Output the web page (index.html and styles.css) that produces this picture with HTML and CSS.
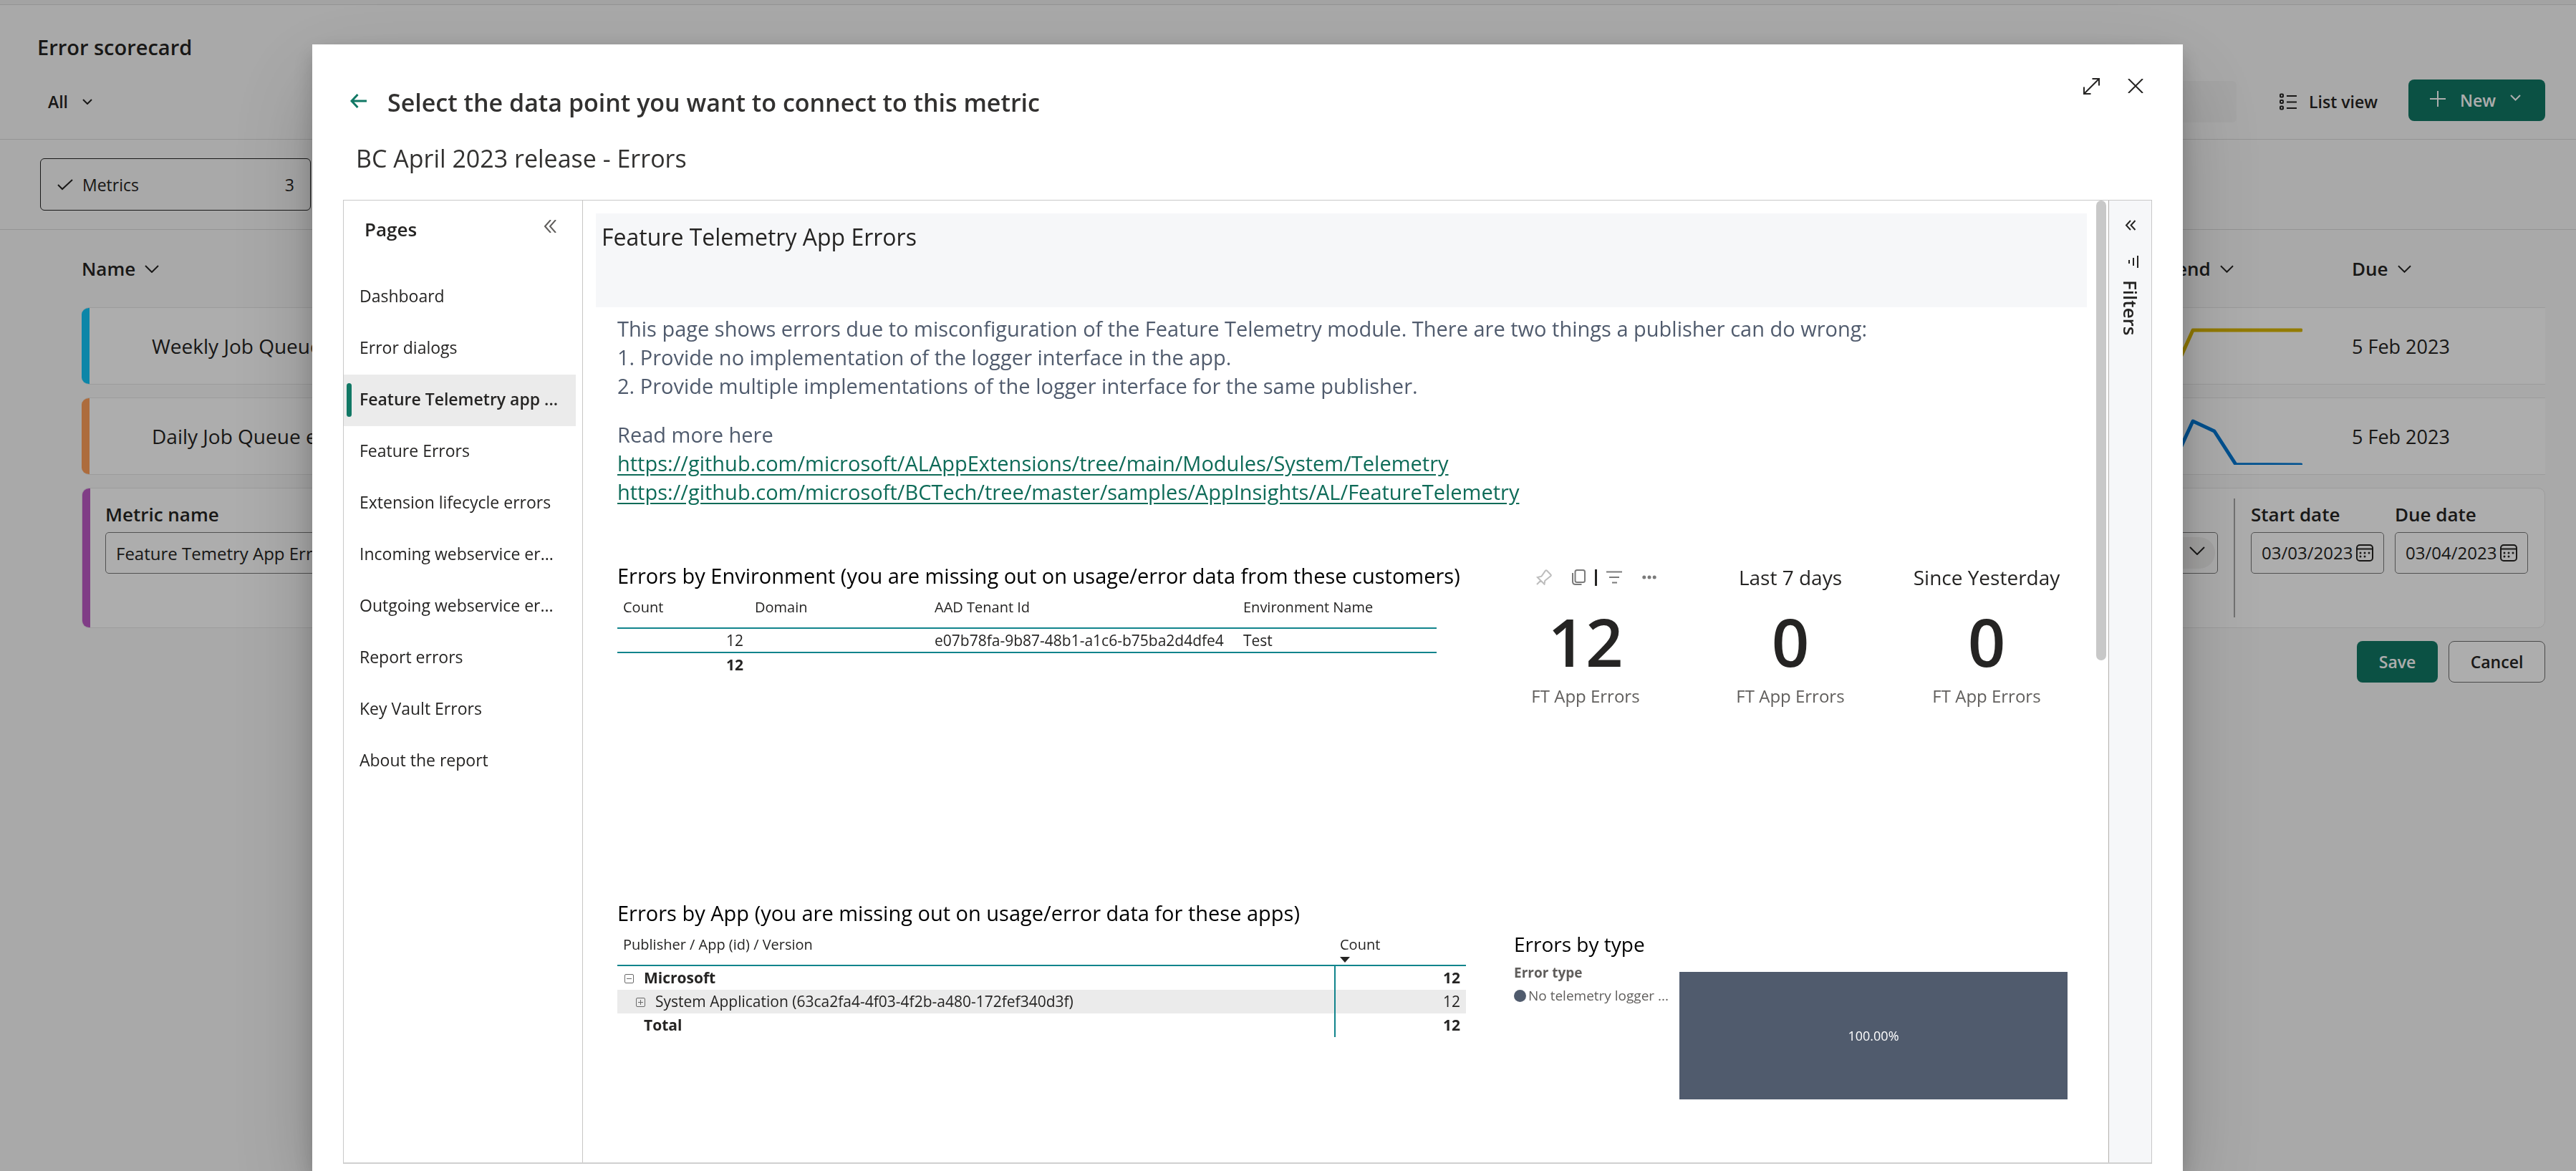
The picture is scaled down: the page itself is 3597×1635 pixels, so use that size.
FILE: index.html
```html
<!DOCTYPE html>
<html lang="en">
<head>
<meta charset="utf-8">
<title>Error scorecard</title>
<link rel="stylesheet" href="styles.css">
</head>
<body>
<div class="topbar"></div>
<header class="page-header">
  <h1>Error scorecard</h1>
  <div class="toolbar">
    <button class="filter-all" type="button">All
      <svg class="chev" width="14" height="8" viewBox="0 0 14 8"><path d="M1 1l6 6 6-6"/></svg>
    </button>
    <input class="search" type="search" aria-label="Search metrics">
    <button class="list-view" type="button">
      <svg width="24" height="24" viewBox="0 0 24 24"><path d="M10 4h14M10 12.500h14M10 21h14"/><rect x="1" y="1.500" width="4" height="4" rx="1"/><rect x="1" y="10" width="4" height="4" rx="1"/><rect x="1" y="18.500" width="4" height="4" rx="1"/></svg>
      List view
    </button>
    <button class="btn primary new" type="button">
      <svg class="plus" width="22" height="22" viewBox="0 0 22 22"><path d="M11 0v22M0 11h22"/></svg>
      New
      <svg class="chev" width="15" height="9" viewBox="0 0 15 9"><path d="M1 1l6.500 6.500L14 1"/></svg>
    </button>
  </div>
</header>
<section class="summary">
  <button class="summary-card" type="button">
    <svg width="22" height="16" viewBox="0 0 22 16"><path d="M1 8l6 6L21 1"/></svg>
    <span>Metrics</span><span class="count">3</span>
  </button>
</section>
<main class="scorecard">
  <div class="cols heads">
    <span class="head">Name <svg class="chev" width="20" height="11" viewBox="0 0 20 11"><path d="M1 1l9 9 9-9"/></svg></span>
    <span class="head">Trend <svg class="chev" width="19" height="11" viewBox="0 0 20 11"><path d="M1 1l9 9 9-9"/></svg></span>
    <span class="head">Due <svg class="chev" width="19" height="11" viewBox="0 0 20 11"><path d="M1 1l9 9 9-9"/></svg></span>
  </div>
  <div class="cols metric blue">
    <span class="metric-name">Weekly Job Queue errors</span>
    <svg class="trend" width="202" height="80" viewBox="0 0 202 80"><path stroke="#d9b500" d="M0 78h22L49 18h151"/></svg>
    <span>5 Feb 2023</span>
  </div>
  <div class="cols metric orange">
    <span class="metric-name">Daily Job Queue errors</span>
    <svg class="trend" width="202" height="80" viewBox="0 0 202 80"><path stroke="#0078d4" d="M0 78h22L49 19l30 14 30 46.500 91 .5"/></svg>
    <span>5 Feb 2023</span>
  </div>
  <form class="metric-edit">
    <label class="field name-field"><span>Metric name</span><input class="box" value="Feature Temetry App Errors"></label>
    <label class="field status-field"><span>Status</span>
      <span class="box pill-box"><select><option></option></select><svg class="chev" width="22" height="12" viewBox="0 0 22 12"><path d="M1 1l10 10L21 1"/></svg></span>
    </label>
    <span class="divider"></span>
    <label class="field"><span>Start date</span>
      <span class="box date"><input value="03/03/2023"><svg width="24" height="24" viewBox="0 0 24 24"><rect x="1" y="1" width="22" height="22" rx="4"/><path d="M1 6.500h22"/><path class="dots" d="M6 12h0M12 12h0M18 12h0M6 17h0M12 17h0"/></svg></span>
    </label>
    <label class="field"><span>Due date</span>
      <span class="box date"><input value="03/04/2023"><svg width="24" height="24" viewBox="0 0 24 24"><rect x="1" y="1" width="22" height="22" rx="4"/><path d="M1 6.500h22"/><path class="dots" d="M6 12h0M12 12h0M18 12h0M6 17h0M12 17h0"/></svg></span>
    </label>
  </form>
  <div class="form-actions">
    <button class="btn primary save" type="button">Save</button>
    <button class="btn outline" type="button">Cancel</button>
  </div>
</main>

<div class="overlay"></div>
<div class="modal" role="dialog" aria-labelledby="dlg-title">
  <header class="modal-header">
    <button class="back" type="button" aria-label="Back"><svg width="24" height="20" viewBox="0 0 24 20"><path d="M23 10H2M10.500 1L2 10l8.500 9"/></svg></button>
    <h2 id="dlg-title">Select the data point you want to connect to this metric</h2>
    <div class="window-actions">
      <button type="button" aria-label="Expand"><svg width="23" height="23" viewBox="0 0 23 23"><path d="M1 22L22 1M12.500 1H22v9.500M1 12.500V22h9.500"/></svg></button>
      <button type="button" aria-label="Close"><svg width="22" height="20" viewBox="0 0 22 20"><path d="M1 0l20 20M21 0L1 20"/></svg></button>
    </div>
  </header>
  <p class="report-name">BC April 2023 release - Errors</p>
  <div class="panel">
    <nav class="pages">
      <div class="pages-head">
        <h3>Pages</h3>
        <button type="button" aria-label="Collapse pages"><svg width="17" height="18" viewBox="0 0 17 18"><path d="M9 0L1 9l8 9M16 0L8 9l8 9"/></svg></button>
      </div>
      <a href="#">Dashboard</a>
      <a href="#">Error dialogs</a>
      <a href="#" class="current">Feature Telemetry app ...</a>
      <a href="#">Feature Errors</a>
      <a href="#">Extension lifecycle errors</a>
      <a href="#">Incoming webservice er...</a>
      <a href="#">Outgoing webservice er...</a>
      <a href="#">Report errors</a>
      <a href="#">Key Vault Errors</a>
      <a href="#">About the report</a>
    </nav>
    <article class="report">
      <div class="scroll-thumb"></div>
      <h3 class="banner">Feature Telemetry App Errors</h3>
      <div class="intro">
        <p>This page shows errors due to misconfiguration of the Feature Telemetry module. There are two things a publisher can do wrong:<br>1. Provide no implementation of the logger interface in the app.<br>2. Provide multiple implementations of the logger interface for the same publisher.</p>
        <p>Read more here<br><a href="#">https://github.com/microsoft/ALAppExtensions/tree/main/Modules/System/Telemetry</a><br><a href="#">https://github.com/microsoft/BCTech/tree/master/samples/AppInsights/AL/FeatureTelemetry</a></p>
      </div>
      <div class="row-top">
        <section>
          <h4>Errors by Environment (you are missing out on usage/error data from these customers)</h4>
          <table class="env">
            <colgroup><col class="c-count"><col class="c-domain"><col class="c-tenant"><col class="c-env"></colgroup>
            <thead><tr><th>Count</th><th>Domain</th><th>AAD Tenant Id</th><th>Environment Name</th></tr></thead>
            <tbody><tr><td class="num">12</td><td></td><td>e07b78fa-9b87-48b1-a1c6-b75ba2d4dfe4</td><td>Test</td></tr></tbody>
            <tfoot><tr><td class="num">12</td><td></td><td></td><td></td></tr></tfoot>
          </table>
        </section>
        <section class="card">
          <div class="visual-tools">
            <button class="pin" type="button" aria-label="Pin visual"><svg width="22" height="22" viewBox="0 0 22 22"><path d="M1 21l5.500-5.500M1.800 11l9.700 9.700.8-5L20 9.500c1-.8 1-1.500.3-2.300L15 1.800c-.8-.8-1.600-.8-2.300.3L7.500 9.600z"/></svg></button>
            <span class="tool-pair">
              <button type="button" aria-label="Copy visual"><svg width="19" height="22" viewBox="0 0 19 22"><rect x="4.500" y="1" width="13.500" height="17" rx="2.500"/><path d="M1 5v12c0 2.800 1.400 4 4 4h8.500"/></svg></button>
              <i></i>
              <button type="button" aria-label="Filters on visual"><svg width="22" height="18" viewBox="0 0 22 18"><path d="M0 1.500h22M4 9h14M8 16.500h7"/></svg></button>
            </span>
            <button type="button" aria-label="More options"><svg class="more" width="20" height="6" viewBox="0 0 20 6"><circle cx="2.800" cy="3" r="2.500"/><circle cx="10" cy="3" r="2.500"/><circle cx="17.200" cy="3" r="2.500"/></svg></button>
          </div>
          <strong>12</strong><span>FT App Errors</span>
        </section>
        <section class="card"><h5>Last 7 days</h5><strong>0</strong><span>FT App Errors</span></section>
        <section class="card"><h5>Since Yesterday</h5><strong>0</strong><span>FT App Errors</span></section>
      </div>
      <div class="row-bottom">
        <section>
          <h4>Errors by App (you are missing out on usage/error data for these apps)</h4>
          <table class="matrix">
            <colgroup><col><col class="c-total"></colgroup>
            <thead><tr><th>Publisher / App (id) / Version</th><th>Count<svg width="14" height="8" viewBox="0 0 14 8"><path d="M0 0h14L7 8z"/></svg></th></tr></thead>
            <tbody>
              <tr class="strong"><td><svg width="13" height="13" viewBox="0 0 13 13"><rect x=".5" y=".5" width="12" height="12" rx="1.500"/><path d="M3 6.500h7"/></svg>Microsoft</td><td class="num">12</td></tr>
              <tr class="child"><td><svg width="13" height="13" viewBox="0 0 13 13"><rect x=".5" y=".5" width="12" height="12" rx="1.500"/><path d="M3 6.500h7M6.500 3v7"/></svg>System Application (63ca2fa4-4f03-4f2b-a480-172fef340d3f)</td><td class="num">12</td></tr>
              <tr class="strong total"><td>Total</td><td class="num">12</td></tr>
            </tbody>
          </table>
        </section>
        <section class="by-type">
          <h4>Errors by type</h4>
          <div class="treemap">
            <div class="legend"><b>Error type</b><span><i></i>No telemetry logger ...</span></div>
            <div class="tile">100.00%</div>
          </div>
        </section>
      </div>
    </article>
    <aside class="filters">
      <button type="button" aria-label="Expand filters"><svg width="16" height="15" viewBox="0 0 16 15"><path d="M8 1L2 7.500 8 14M14.500 1l-6 6.500 6 6.500"/></svg></button>
      <svg width="16" height="17" viewBox="0 0 16 17"><path d="M14 0v17M8 3v11M2 6v5"/></svg>
      <h3>Filters</h3>
    </aside>
  </div>
</div>
</body>
</html>
```
FILE: styles.css
```css
* { box-sizing: border-box; }

body {
  margin: 0;
  min-height: 100vh;
  overflow: hidden;
  background: #fafafa;
  color: #252423;
  font-family: "Open Sans", "Noto Sans", sans-serif;
  font-size: 23px;
}

h1, h2, h3, h4, h5, p { margin: 0; }
svg { display: block; flex: none; fill: none; stroke: currentColor; stroke-width: 2; }
button { padding: 0; border: 0; background: none; color: inherit; font: inherit; }
input, select { min-width: 0; border: 0; background: none; color: inherit; font: inherit; }

/* Scorecard page */
.topbar { height: 7px; background: #f1f1f1; border-bottom: 1px solid #dadada; }

.page-header { padding: 39px 43px 21px 52px; border-bottom: 1px solid #dadada; }
.page-header h1 { font-size: 29px; font-weight: 600; line-height: 40px; }

.toolbar { display: flex; align-items: center; height: 62px; margin-top: 25px; font-weight: 600; }
.filter-all { display: flex; align-items: center; gap: 20px; margin-left: 15px; }
.search { width: 400px; height: 58px; margin-left: auto; border-radius: 6px; background: #f3f3f3; }
.list-view { display: flex; align-items: center; gap: 17px; margin: 0 43px 0 60px; }

.btn { height: 58px; border-radius: 8px; font-weight: 600; }
.primary { background: #117865; color: #fff; }
.outline { width: 135px; border: 1px solid #6e6e6e; background: #fff; }
.save { width: 113px; }
.new { display: flex; align-items: center; align-self: flex-start; gap: 20px; width: 191px; padding-left: 30px; }
.plus { margin-bottom: 4px; }
.new .chev { margin-bottom: 8px; }

.summary { padding: 26px 56px; border-bottom: 1px solid #dadada; }
.summary-card { display: flex; align-items: center; gap: 13px; width: 378px; height: 73px; padding: 0 22px 0 23px; border: 1px solid #242424; border-radius: 6px; }
.summary-card .count { margin-left: auto; }

.scorecard { display: flex; flex-direction: column; gap: 18px; padding: 0 43px 0 114px; }
.cols { display: grid; grid-template-columns: 1fr 271px 270px; align-items: center; height: 108px; }
.heads { margin-bottom: -18px; font-size: 26px; font-weight: 600; }
.head { display: flex; align-items: center; gap: 13px; }
.metric, .metric-edit { position: relative; border: 1px solid #e6e6e6; border-radius: 10px; background: #fff; overflow: hidden; }
.metric { border-width: 1px 0; border-radius: 10px 0 0 10px; font-size: 27px; }
.metric::before, .metric-edit::before { content: ""; position: absolute; inset: 0 auto 0 0; width: 11px; background: #bd5bc6; }
.blue::before { background: #14c6f8; }
.orange::before { background: #ffa05a; }
.metric-name { padding-left: 98px; font-size: 28px; white-space: nowrap; }
.trend { stroke-width: 5; stroke-linecap: round; stroke-linejoin: round; }

.metric-edit { display: flex; gap: 22px; height: 196px; padding: 18px 23px 0 32px; }
.field { display: flex; flex-direction: column; gap: 7px; font-size: 26px; font-weight: 600; line-height: 36px; }
.field + .field { margin-left: -7px; }
.box { display: flex; align-items: center; height: 58px; padding: 0 14px; border: 1px solid #7a7a7a; border-radius: 5px; font-size: 24px; font-weight: 400; }
.name-field { width: 640px; }
.field.status-field { width: 500px; margin-left: auto; }
.pill-box { position: relative; padding: 4px 3px; }
.pill-box select { width: 100%; height: 44px; border-radius: 22px; background: #f3f2f1; appearance: none; }
.pill-box .chev { position: absolute; right: 17px; top: 19px; }
.divider { width: 2px; height: 166px; margin-top: -4px; background: #a8a8a8; }
.date { width: 186px; }
.date input { width: 136px; padding: 0; }
.dots { stroke-width: 3; stroke-linecap: round; }
.form-actions { display: flex; justify-content: flex-end; gap: 15px; }

/* Data point dialog */
.overlay { position: fixed; inset: 0; background: rgba(0, 0, 0, .32); }
.modal {
  position: fixed;
  inset: 62px 549px 0 436px;
  display: flex;
  flex-direction: column;
  padding: 38px 43px 10px;
  background: #fff;
  box-shadow: 0 50px 115px rgba(0, 0, 0, .22), 0 10px 28px rgba(0, 0, 0, .18);
}
.modal-header { display: flex; align-items: flex-start; height: 66px; }
.modal-header h2 { margin-top: 19px; font-size: 34px; font-weight: 600; line-height: 48px; color: #323130; }
.back { display: flex; align-items: center; height: 48px; margin: 17px 28px 0 10px; color: #117865; }
.back svg { stroke-width: 3; }
.window-actions { display: flex; gap: 39px; margin: 0 12px 0 auto; }
.window-actions button { display: flex; align-items: center; height: 40px; }
.report-name { margin: 31px 0 34px 18px; font-size: 34px; line-height: 48px; color: #323130; }

.panel { display: grid; grid-template-columns: 334px 1fr 60px; flex: 1; border: 1px solid #c8c8c8; border-bottom: 2px solid #d0d0d0; }

.pages { border-right: 1px solid #c8c6c4; }
.pages-head { display: flex; justify-content: space-between; align-items: flex-start; height: 99px; padding: 20px 36px 0 29px; }
.pages-head h3 { font-size: 26px; font-weight: 600; line-height: 40px; }
.pages-head button { display: flex; align-items: center; height: 32px; color: #605e5c; }
.pages a { position: relative; display: flex; align-items: center; height: 72px; margin-right: 9px; padding: 0 0 4px 22px; color: #252423; text-decoration: none; white-space: nowrap; }
.pages .current { background: #ebebeb; font-weight: 600; }
.current::before { content: ""; position: absolute; left: 4px; top: 12px; width: 7px; height: 47px; border-radius: 4px; background: #117865; }

.report { position: relative; padding: 18px 30px 0 18px; }
.scroll-thumb { position: absolute; top: 0; right: 3px; width: 14px; height: 642px; border-radius: 7px; background: #c8c8c8; }
.banner { height: 131px; padding: 11px 8px; background: #f6f7f9; font-size: 32px; font-weight: 400; line-height: 44px; }
.intro { display: grid; gap: 28px; margin: 10px 0 77px 30px; font-size: 29px; line-height: 40px; color: #505b6d; }
.intro a { color: #0e6b58; text-underline-offset: 4px; }

.row-top { display: grid; grid-template-columns: 1fr 286px 286px 262px; min-height: 471px; padding: 0 9px 0 30px; }
h4 { font-size: 29px; font-weight: 400; line-height: 40px; color: #000; white-space: nowrap; }
table { border-collapse: separate; border-spacing: 0; table-layout: fixed; font-size: 21px; line-height: 30px; }
th { padding: 9px 8px 13px; border-bottom: 2px solid #11848c; font-size: 20px; font-weight: 400; text-align: left; vertical-align: top; }
td { padding: 1px 8px; white-space: nowrap; }
.num { text-align: right; }
.env { width: 1144px; }
.env tbody td { border-bottom: 2px solid #11848c; }
.env tfoot { font-weight: 700; }
.c-count { width: 184px; }
.c-domain { width: 251px; }
.c-tenant { width: 431px; }

.card { display: flex; flex-direction: column; align-items: center; }
.card h5 { font-size: 28px; font-weight: 400; line-height: 44px; }
.card strong { margin-top: 8px; font-size: 92px; font-weight: 600; line-height: 120px; }
.card > span { font-size: 24px; line-height: 32px; color: #605e5c; }
.visual-tools { display: flex; align-items: center; align-self: flex-start; gap: 28px; height: 44px; padding-left: 74px; color: #7a7a7a; }
.tool-pair { display: flex; align-items: center; gap: 13px; }
.tool-pair i { width: 3px; height: 23px; background: #252423; }
.pin { color: #bdbdbd; }
.more { fill: currentColor; stroke: none; }

.row-bottom { display: grid; grid-template-columns: 1185px 1fr; gap: 67px; padding: 0 27px 0 30px; }
.matrix { width: 100%; line-height: 31px; }
.matrix th { line-height: 30px; }
.matrix th svg { margin: 2px 0 -10px; fill: #252423; stroke: none; }
.matrix td svg { display: inline-block; margin-right: 14px; stroke: #6a6a6a; stroke-width: 1; }
.matrix td:first-child { padding-left: 10px; }
.matrix td.num { border-left: 2px solid #11848c; }
.c-total { width: 184px; }
.strong { font-weight: 700; }
.child { background: #ebebeb; }
.matrix .child td:first-child { padding-left: 26px; }
.matrix .total td:first-child { padding-left: 37px; }

.by-type { margin-top: 43px; }
.by-type h4 { font-size: 28px; }
.treemap { display: grid; grid-template-columns: 231px 1fr; }
.legend { display: flex; flex-direction: column; margin-top: 4px; font-size: 19px; line-height: 32px; color: #605e5c; }
.legend span { display: flex; align-items: center; gap: 3px; white-space: nowrap; }
.legend i { width: 17px; height: 17px; border-radius: 50%; background: #505b6d; }
.tile { display: grid; place-items: center; height: 178px; margin-top: 19px; background: #505b6d; color: #fff; font-size: 18px; }

.filters { display: flex; flex-direction: column; align-items: center; padding-top: 27px; border-left: 1px solid #b3b0ad; background: #f6f7f9; }
.filters > svg { margin: 35px 0 17px 8px; }
.filters h3 { font-size: 26px; font-weight: 600; line-height: 36px; writing-mode: vertical-rl; }
```
